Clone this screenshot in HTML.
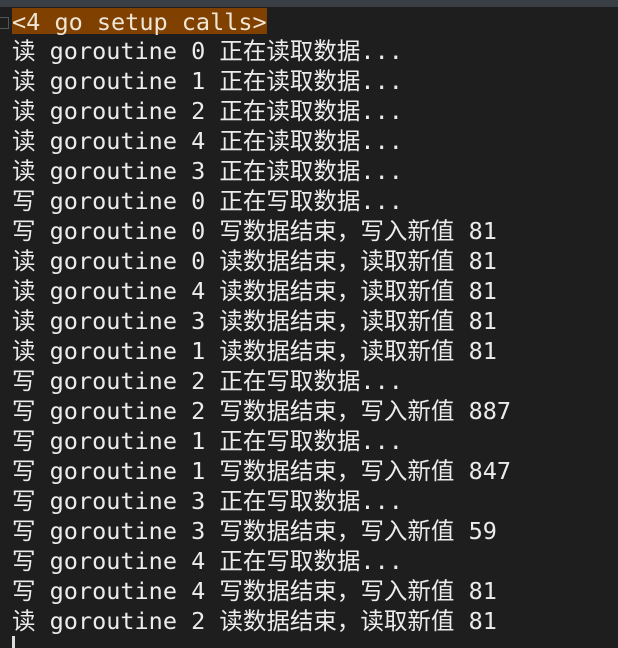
<!DOCTYPE html>
<html><head><meta charset="utf-8"><style>
html,body{margin:0;padding:0;background:#1e1e1e;width:618px;height:648px;overflow:hidden}
.top{position:absolute;left:0;top:0;width:618px;height:7px;background:#3a3f46}
.box{position:absolute;left:0;top:17px;width:8px;height:10px;border:1px solid #555;border-left:none}
.t{position:absolute;left:12px;top:6px;font-family:"DejaVu Sans Mono","Noto Sans CJK SC",monospace;font-size:23.5px;line-height:30px;color:#ececec;white-space:pre}
.hl{background:#7f4000;color:#f0e6d6;display:inline-block;height:26px;line-height:28px;vertical-align:top;margin-top:2px}
.cur{position:absolute;left:12px;top:636px;width:3px;height:12px;background:#ddd}
</style></head><body>
<div class="top"></div><div class="box"></div>
<div class="t"><span class="hl">&lt;4 go setup calls&gt;</span>
读 goroutine 0 正在读取数据...
读 goroutine 1 正在读取数据...
读 goroutine 2 正在读取数据...
读 goroutine 4 正在读取数据...
读 goroutine 3 正在读取数据...
写 goroutine 0 正在写取数据...
写 goroutine 0 写数据结束，写入新值 81
读 goroutine 0 读数据结束，读取新值 81
读 goroutine 4 读数据结束，读取新值 81
读 goroutine 3 读数据结束，读取新值 81
读 goroutine 1 读数据结束，读取新值 81
写 goroutine 2 正在写取数据...
写 goroutine 2 写数据结束，写入新值 887
写 goroutine 1 正在写取数据...
写 goroutine 1 写数据结束，写入新值 847
写 goroutine 3 正在写取数据...
写 goroutine 3 写数据结束，写入新值 59
写 goroutine 4 正在写取数据...
写 goroutine 4 写数据结束，写入新值 81
读 goroutine 2 读数据结束，读取新值 81</div>
<div class="cur"></div>
</body></html>
